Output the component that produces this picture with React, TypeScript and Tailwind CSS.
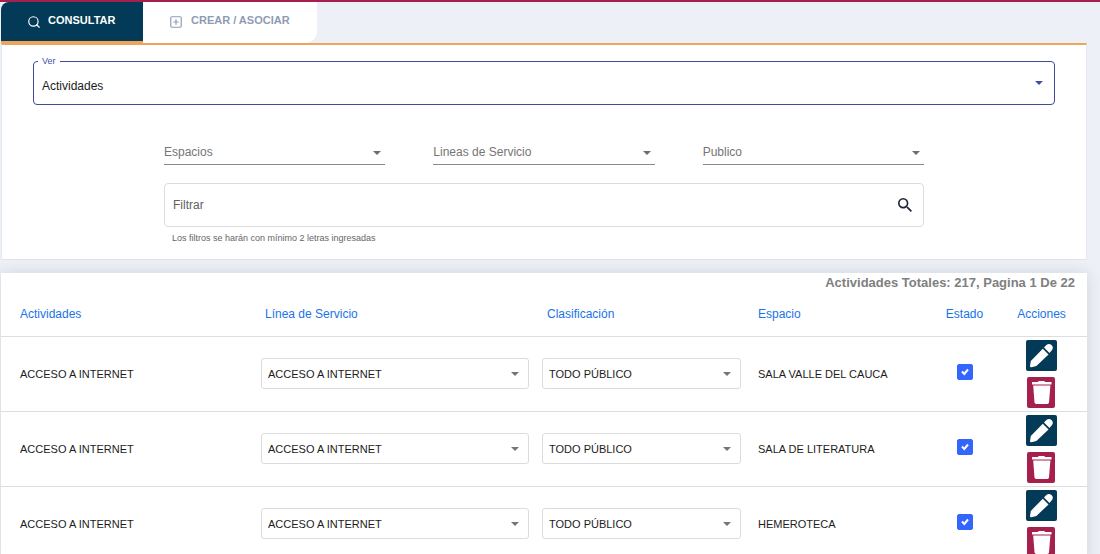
import React, { useState } from 'react';
import { Search, SquarePlus } from 'lucide-react';

const rows = [
  { id: 1, name: 'ACCESO A INTERNET', service: 'ACCESO A INTERNET', audience: 'TODO PÚBLICO', space: 'SALA VALLE DEL CAUCA' },
  { id: 2, name: 'ACCESO A INTERNET', service: 'ACCESO A INTERNET', audience: 'TODO PÚBLICO', space: 'SALA DE LITERATURA' },
  { id: 3, name: 'ACCESO A INTERNET', service: 'ACCESO A INTERNET', audience: 'TODO PÚBLICO', space: 'HEMEROTECA' },
];

const filters = ['Espacios', 'Lineas de Servicio', 'Publico'];

function Caret({ className }: { className: string }) {
  return (
    <svg viewBox="0 0 8 4" className={`pointer-events-none col-start-1 row-start-1 h-1 w-2 self-center justify-self-end ${className}`}>
      <path d="M0 0h8L4 4z" fill="currentColor" />
    </svg>
  );
}

function PencilIcon() {
  return (
    <svg viewBox="0 0 31 31" className="h-[31px] w-[31px]" fill="#fff">
      <path d="M16.800 8.700l5.700 5.700L10.400 26 5.500 27.300Q3.900 27.500 4 25.900l.8-5z" />
      <path d="M18 7.500l2.400-2.400q2.600-2.300 5.100 0 2.500 2.600.3 5.200l-2.300 2.800z" />
    </svg>
  );
}

function TrashIcon() {
  return (
    <svg viewBox="0 0 28 31" className="h-[31px] w-7" fill="#fff">
      <path d="M5 5h6q.3-1 1-1h5q.7 0 1 1h6.500v2.600H5z" />
      <path d="M6.200 8.600h17.200L22 25.300Q21.800 27 20.200 27H9.300Q7.700 27 7.500 25.300z" />
    </svg>
  );
}

function CellSelect({ label, value }: { label: string; value: string }) {
  return (
    <div className="grid">
      <select
        aria-label={label}
        defaultValue={value}
        className="col-start-1 row-start-1 h-[31px] w-full appearance-none rounded-[3px] border border-[#dcdcdc] bg-white pt-[2px] pr-6 pl-[6px] text-[11px] text-[#1c1c1c]"
      >
        <option>{value}</option>
      </select>
      <Caret className="mr-[10px] text-[#757575]" />
    </div>
  );
}

function App() {
  const [tab, setTab] = useState<'consultar' | 'crear'>('consultar');
  const [search, setSearch] = useState('');
  const [enabled, setEnabled] = useState<Record<number, boolean>>({ 1: true, 2: true, 3: true });

  const tabClass = (active: boolean) =>
    active ? 'border-[#f0a35a] bg-[#023a57] text-white' : 'border-transparent bg-white text-[#8f9bb3]';

  return (
    <div className="h-screen overflow-hidden border-t-2 border-[#a6204e] bg-[#edf0f7] pr-[13px] pl-px font-['Liberation_Sans',Arial,sans-serif] text-xs text-[#1c1c1c]">
      <nav className="flex h-[41px] text-[11px] font-bold">
        <button
          onClick={() => setTab('consultar')}
          className={`flex w-[142px] items-center rounded-tl-lg border-b-2 pl-[26px] ${tabClass(tab === 'consultar')}`}
        >
          <Search className="mr-[7px] h-[14px] w-[14px]" strokeWidth={2} />
          <span className="mb-[3px]">CONSULTAR</span>
        </button>
        <button
          onClick={() => setTab('crear')}
          className={`flex w-[174px] items-center rounded-br-xl border-b-2 pl-[26px] ${tabClass(tab === 'crear')}`}
        >
          <SquarePlus className="mr-2 h-[14px] w-[14px]" strokeWidth={2} />
          <span className="mb-[3px]">CREAR / ASOCIAR</span>
        </button>
      </nav>

      <section className="border-t-2 border-t-[#eba65c] border-r border-b border-l border-x-[#e4e8f0] border-b-[#e1e4ea] bg-white pt-[10px] pb-[15px]">
        <fieldset className="mx-[31px] rounded-[4px] border border-[#3f4a9a]">
          <legend className="ml-1 h-3 px-1 text-[9px] leading-3 text-[#3f51b5]">
            <label htmlFor="ver">Ver</label>
          </legend>
          <div className="grid">
            <select id="ver" defaultValue="Actividades" className="col-start-1 row-start-1 h-[37px] w-full appearance-none bg-transparent pr-8 pl-2 outline-none">
              <option>Actividades</option>
            </select>
            <Caret className="mr-[11px] mb-[6px] text-[#3f4fa8]" />
          </div>
        </fieldset>

        <div className="mx-[162px]">
          <div className="mt-9 grid grid-cols-3 gap-12">
            {filters.map((filter) => (
              <div key={filter} className="grid">
                <select
                  aria-label={filter}
                  defaultValue=""
                  className="col-start-1 row-start-1 h-6 w-full appearance-none border-b border-[#8a8a8a] bg-transparent pr-5 pb-px text-[#757575] outline-none"
                >
                  <option value="">{filter}</option>
                </select>
                <Caret className="mr-1 text-[#6e6e6e]" />
              </div>
            ))}
          </div>

          <div className="mt-[18px] flex h-11 items-center rounded-[4px] border border-[#dcdcdc] pr-[11px] pl-2">
            <input
              type="text"
              aria-label="Filtrar"
              aria-describedby="filtrar-ayuda"
              placeholder="Filtrar"
              value={search}
              onChange={(e) => setSearch(e.target.value)}
              className="min-w-0 flex-1 outline-none placeholder:text-[#616161]"
            />
            <button aria-label="Buscar">
              <svg viewBox="3 3 17.500 17.500" className="h-[14px] w-[14px]" fill="#1b2338">
                <path d="M15.500 14h-.79l-.28-.27A6.471 6.471 0 0 0 16 9.500 6.500 6.500 0 1 0 9.500 16c1.610 0 3.090-.59 4.230-1.570l.27.28v.79l5 4.990L20.490 19l-4.990-5zm-6 0C7.010 14 5 11.990 5 9.500S7.010 5 9.500 5 14 7.010 14 9.500 11.990 14 9.500 14z" />
              </svg>
            </button>
          </div>
          <p id="filtrar-ayuda" className="mt-[5px] ml-2 text-[9px] leading-3 text-[#666]">
            Los filtros se harán con mínimo 2 letras ingresadas
          </p>
        </div>
      </section>

      <section className="mt-[13px] bg-white shadow-[0_0_14px_rgba(44,51,73,0.14)]">
        <p className="pr-3 text-right text-[13px] leading-5 font-bold text-[#808080]">Actividades Totales: 217, Pagina 1 De 22</p>
        <table className="w-full table-fixed border-collapse text-left">
          <colgroup>
            <col />
            <col className="w-[281px]" />
            <col className="w-[216px]" />
            <col className="w-[169px]" />
            <col className="w-[75px]" />
            <col className="w-[85px]" />
          </colgroup>
          <thead>
            <tr className="h-[43px] border-b border-[#dcdee2] text-[#1a73e8]">
              <th className="pl-[19px] font-normal">Actividades</th>
              <th className="pl-1 font-normal">Línea de Servicio</th>
              <th className="pl-[5px] font-normal">Clasificación</th>
              <th className="font-normal">Espacio</th>
              <th className="text-center font-normal">Estado</th>
              <th className="pr-[6px] text-center font-normal">Acciones</th>
            </tr>
          </thead>
          <tbody>
            {rows.map((row) => (
              <tr key={row.id} className="border-b border-[#dcdee2] text-[11px]">
                <td className="pt-[2px] pl-[19px]">{row.name}</td>
                <td className="pr-[13px]">
                  <CellSelect label="Línea de Servicio" value={row.service} />
                </td>
                <td className="pr-[17px]">
                  <CellSelect label="Clasificación" value={row.audience} />
                </td>
                <td className="pt-[2px]">{row.space}</td>
                <td className="pb-1">
                  <div className="grid place-items-center">
                    <input
                      type="checkbox"
                      aria-label="Estado"
                      checked={enabled[row.id]}
                      onChange={(e) => setEnabled({ ...enabled, [row.id]: e.target.checked })}
                      className="col-start-1 row-start-1 h-4 w-4 appearance-none rounded-[2px] border border-[#3366ff] checked:bg-[#3366ff]"
                    />
                    <svg viewBox="0 0 16 16" className="pointer-events-none col-start-1 row-start-1 h-4 w-4" fill="none" stroke="#fff" strokeWidth="2">
                      <path d="M5 7.500l2.300 2.500 3.700-4.500" />
                    </svg>
                  </div>
                </td>
                <td className="py-[3px] pr-[7px]">
                  <div className="flex flex-col items-center gap-[6px]">
                    <button aria-label="Editar" className="rounded-[2px] bg-[#023a57]">
                      <PencilIcon />
                    </button>
                    <button aria-label="Eliminar" className="rounded-[2px] bg-[#a6204e]">
                      <TrashIcon />
                    </button>
                  </div>
                </td>
              </tr>
            ))}
          </tbody>
        </table>
      </section>
    </div>
  );
}

export default App;
